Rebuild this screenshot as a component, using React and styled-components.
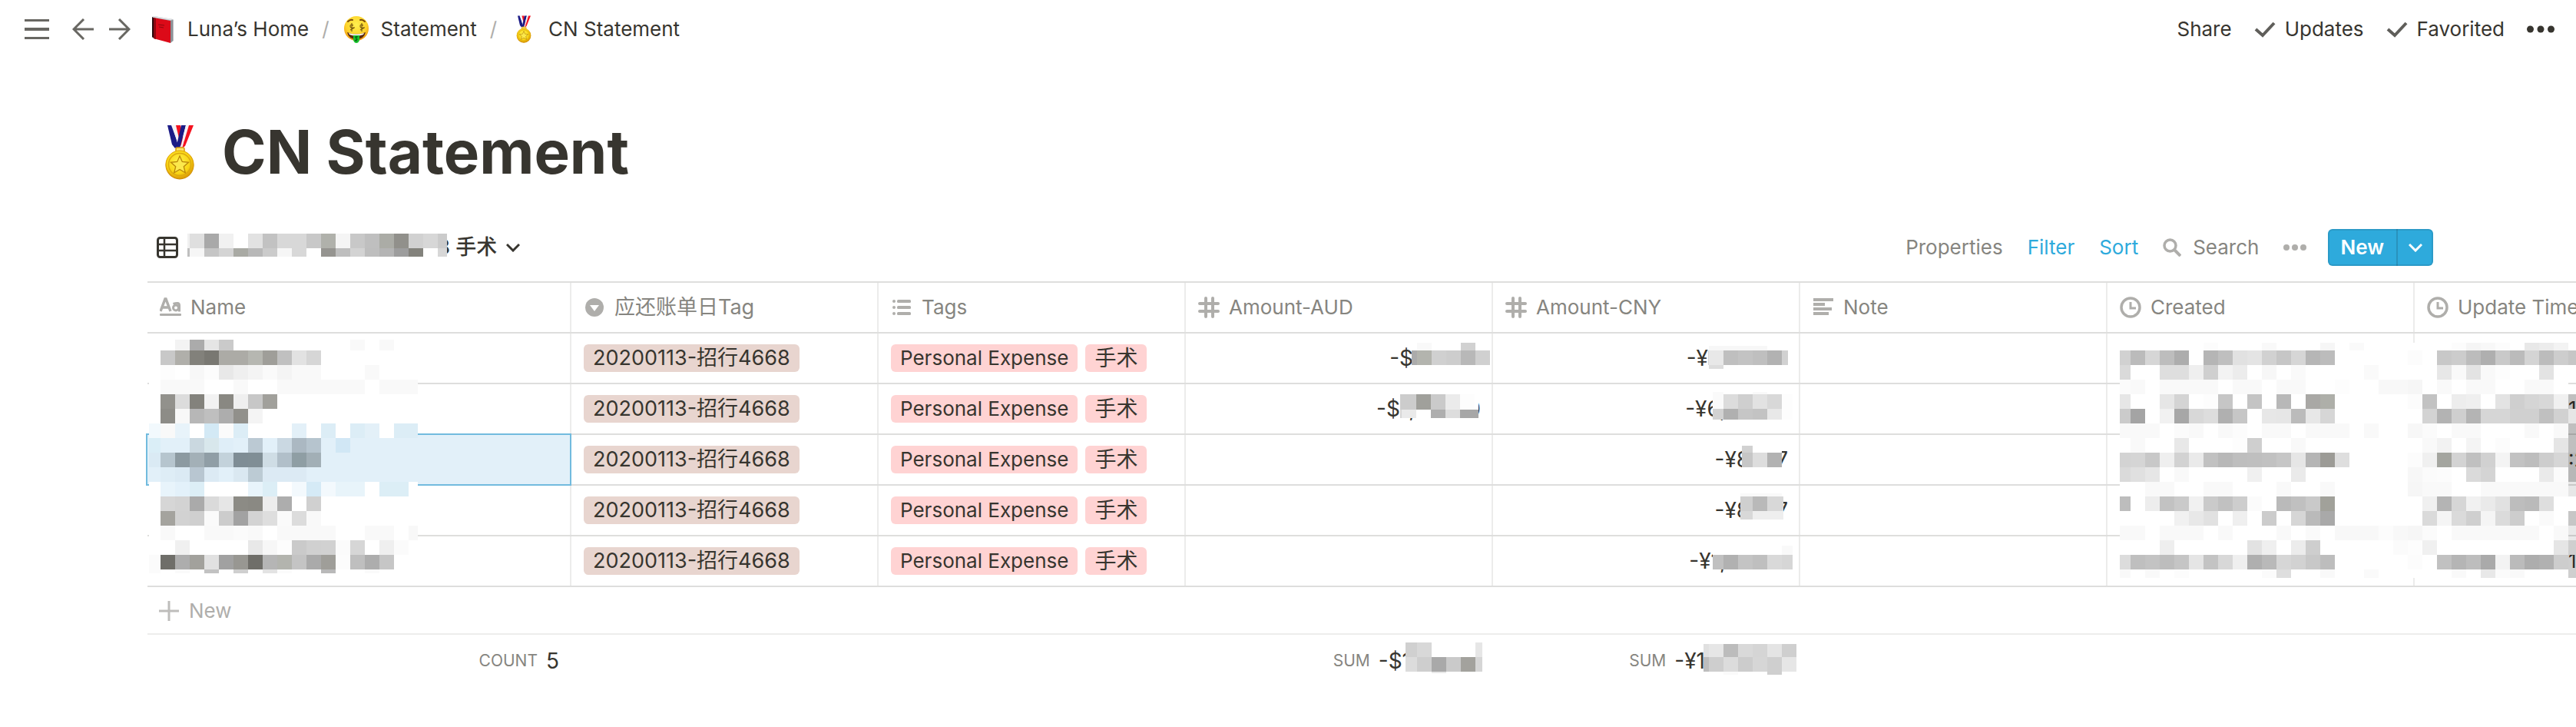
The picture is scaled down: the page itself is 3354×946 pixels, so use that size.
import React from 'react';
import styled, { createGlobalStyle, css } from 'styled-components';

const Global = createGlobalStyle`
  *, *::before, *::after { box-sizing: border-box; }
  body {
    margin: 0;
    background: #fff;
    color: #37352f;
    font-family: Inter, "Noto Sans CJK SC", "Liberation Sans", sans-serif;
    font-size: 26px;
    line-height: 36px;
  }
  button, a { font: inherit; color: inherit; text-decoration: none; }
  button { border: 0; padding: 0; background: none; cursor: pointer; white-space: nowrap; }
  svg { display: block; flex: none; }
`;

/* ---------- icons ---------- */

const MenuIcon = () => (
  <svg width="32" height="28" viewBox="0 0 32 28" fill="#686762">
    <rect y="1" width="32" height="3" /><rect y="12" width="32" height="4" /><rect y="24" width="32" height="3" />
  </svg>
);
const ArrowIcon = ({ right }) => (
  <svg width="28" height="28" viewBox="0 0 28 28" fill="none" stroke="#686762" strokeWidth="3">
    <path d={right ? 'M0 14h26M13 1l13 13-13 13' : 'M28 14H2M15 1L2 14l13 13'} />
  </svg>
);
const CheckIcon = () => (
  <svg width="28" height="28" viewBox="0 0 28 28" fill="none" stroke="#5f5e5a" strokeWidth="4">
    <path d="M2 14l9 8L26 6" />
  </svg>
);
const DotsIcon = ({ size, r, color }) => (
  <svg width={size} height="12" viewBox={`0 0 ${size} 12`} fill={color}>
    <circle cx={r} cy="6" r={r} /><circle cx={size / 2} cy="6" r={r} /><circle cx={size - r} cy="6" r={r} />
  </svg>
);
const BookIcon = () => (
  <svg width="36" height="36" viewBox="0 0 36 36">
    <path d="M4 2l3-1 24 4 1 1v27l-3 2L4 29z" fill="#b9bcc0" />
    <path d="M4 2l3 2v26l-3-2z" fill="#2a0a0c" />
    <path d="M6 3l22 4v29L6 30z" fill="#dc0a18" />
    <path d="M5 2l2-1 24 4-3 1z" fill="#e9e9ec" />
    <path d="M6 3l3 1v27l-3-1z" fill="#8f0710" />
    <path d="M12 12l8 1M13 15l6 1" stroke="#8f0710" strokeWidth="1" fill="none" />
    <path d="M28 7l3-1v27l-3 3z" fill="#8d9196" />
  </svg>
);
const MoneyFaceIcon = () => (
  <svg width="36" height="36" viewBox="0 0 36 36">
    <defs>
      <radialGradient id="face" cx="50%" cy="35%" r="65%">
        <stop offset="0" stopColor="#fff04f" /><stop offset=".65" stopColor="#fdd32c" /><stop offset="1" stopColor="#f0930c" />
      </radialGradient>
    </defs>
    <circle cx="18" cy="17" r="16" fill="url(#face)" />
    <path d="M7 8q3-3 6-2M23 6q3-1 6 2" stroke="#7a4a0c" strokeWidth="2" fill="none" strokeLinecap="round" />
    <path d="M14 13q-4-2-4 1t4 2-4 3M12 10v11M27 13q-4-2-4 1t4 2-4 3M25 10v11" stroke="#7a5a10" strokeWidth="1.2" fill="none" />
    <path d="M6 22q12 5 24 0-2 9-12 9T6 22z" fill="#5b2a0c" />
    <path d="M8 23q10 3 20 0l-1 2q-9 3-18 0z" fill="#fff" />
    <path d="M14 26h8v6q-1 4-4 4t-4-4z" fill="#19c32c" />
    <path d="M20 28q-4-1-3 1t2 2-3 2M18 27v7" stroke="#07661a" strokeWidth="1.2" fill="none" />
  </svg>
);
const MedalIcon = ({ size }) => (
  <svg width={size} height={size} viewBox="0 0 72 72">
    <defs>
      <radialGradient id="gold" cx="45%" cy="40%" r="60%">
        <stop offset="0" stopColor="#fff24a" /><stop offset=".7" stopColor="#f8d414" /><stop offset="1" stopColor="#dd9c06" />
      </radialGradient>
    </defs>
    <path d="M28 1h15l-5 28h-4z" fill="#f3f3f6" />
    <path d="M31 1h6l5 22-4 7z" fill="#f4121f" />
    <path d="M20 1h6l8 26-4 4-4-5z" fill="#1b1b86" />
    <path d="M25 1h4l8 24-2 3z" fill="#f3f3f6" />
    <path d="M38 1h6l-8 30h-5z" fill="#1b1b86" />
    <path d="M44 1h4l-8 27-3 2z" fill="#f3f3f6" />
    <path d="M48 1h6L43 28l-4 3z" fill="#f4121f" />
    <rect x="31" y="30" width="11" height="8" rx="2" fill="#fbe46a" stroke="#d79a0c" strokeWidth="1.5" />
    <circle cx="36" cy="53" r="18.5" fill="#c98605" />
    <circle cx="36" cy="52" r="18" fill="url(#gold)" stroke="#e0a50a" strokeWidth="1" />
    <circle cx="36" cy="52" r="14.5" fill="none" stroke="#dca90e" strokeWidth="1.5" />
    <path d="M36 41l3.3 7.5 8.2.8-6.2 5.4 1.9 8L36 58.5l-7.2 4.2 1.9-8-6.2-5.4 8.2-.8z" fill="#fbe84c" stroke="#b98508" strokeWidth="1.3" />
  </svg>
);
const TableIcon = () => (
  <svg width="28" height="28" viewBox="0 0 28 28" fill="none" stroke="#37352f" strokeWidth="3">
    <rect x="1.5" y="1.5" width="25" height="25" rx="3" />
    <path d="M2 10h24M2 18h24M10 2v24" strokeWidth="2.5" />
  </svg>
);
const ChevronIcon = ({ color }) => (
  <svg width="18" height="12" viewBox="0 0 18 12" fill="none" stroke={color} strokeWidth="3">
    <path d="M1 2l8 8 8-8" />
  </svg>
);
const SearchIcon = () => (
  <svg width="24" height="24" viewBox="0 0 24 24" fill="none" stroke="#afaeab" strokeWidth="3.5">
    <circle cx="9.5" cy="9.5" r="7.5" /><path d="M15 15l8 8" strokeWidth="4" />
  </svg>
);
const PlusIcon = () => (
  <svg width="26" height="26" viewBox="0 0 26 26" stroke="#bebdbb" strokeWidth="3">
    <path d="M13 0v26M0 13h26" />
  </svg>
);
const fieldShapes = {
  title: (
    <>
      <path d="M1 19L7 3h1l6 16M3.5 14h8" fill="none" stroke="#afaeab" strokeWidth="3.5" />
      <circle cx="21" cy="14.5" r="3.5" fill="none" stroke="#afaeab" strokeWidth="3" />
      <path d="M17.5 9.500q8-3 8 2v8" fill="none" stroke="#afaeab" strokeWidth="3" />
      <rect y="22" width="28" height="3" rx="1" />
    </>
  ),
  select: (<><circle cx="14" cy="14" r="12" /><path d="M8 11h12l-6 8z" fill="#fff" /></>),
  tags: (
    <>
      <circle cx="4" cy="6" r="2" /><circle cx="4" cy="14" r="2" /><circle cx="4" cy="22" r="2" />
      <rect x="8" y="4" width="18" height="4" rx="1.5" /><rect x="8" y="12" width="18" height="4" rx="1.5" /><rect x="8" y="20" width="18" height="4" rx="1.5" />
    </>
  ),
  number: (
    <path d="M10 2v24M19 2v24M2 9h24M2 19h24" fill="none" stroke="#afaeab" strokeWidth="4" strokeLinecap="round" />
  ),
  text: (
    <>
      <rect x="1" y="2" width="26" height="4" /><rect x="1" y="8" width="15" height="4" />
      <rect x="1" y="14" width="24" height="4" /><rect x="1" y="20" width="20" height="4" />
    </>
  ),
  time: (<g fill="none" stroke="#afaeab" strokeWidth="3.5"><circle cx="14" cy="14" r="12" /><path d="M14 7v8h7" strokeWidth="3" /></g>),
};
const FieldIcon = ({ kind }) => (
  <svg width="28" height="28" viewBox="0 0 28 28" fill="#afaeab" aria-hidden="true">{fieldShapes[kind]}</svg>
);

/* ---------- pixelated privacy patches ---------- */

const CELL = 19;
const MosaicSvg = styled.svg`
  position: relative;
  z-index: 1;
  align-self: flex-start;
  margin-top: ${(p) => p.$drop || 0}px;
  margin-left: ${(p) => -(p.$overlap || 0)}px;
  margin-right: ${(p) => -(p.$bleed || 0)}px;
`;

/* Each row lists "column:shade" or "from-to:shade"; a shade is two hex digits of grey or a full colour. */
const parseRow = (row) =>
  row.split(' ').filter(Boolean).flatMap((token) => {
    const [span, shade] = token.split(':');
    const [from, to = from] = span.split('-').map(Number);
    const fill = `#${shade.length === 2 ? shade.repeat(3) : shade}`;
    return Array.from({ length: to - from + 1 }, (_, i) => ({ col: from + i, fill }));
  });

const Mosaic = ({ w, h, fx = CELL, fy = CELL, rows, base = w, drop, overlap, bleed }) => (
  <MosaicSvg width={w} height={h} viewBox={`0 0 ${w} ${h}`} shapeRendering="crispEdges"
    $drop={drop} $overlap={overlap} $bleed={bleed} aria-hidden="true">
    <rect width={base} height={h} fill="#fff" />
    {rows.map((row, r) => parseRow(row).map(({ col, fill }) => (
      <rect key={`${r}-${col}`} fill={fill}
        x={col ? fx + (col - 1) * CELL : 0} y={r ? fy + (r - 1) * CELL : 0}
        width={col ? CELL : fx} height={r ? CELL : fy} />
    )))}
  </MosaicSvg>
);

const namePatch = {
  w: 350, h: 304, fx: 15, fy: 14,
  rows: [
    '2:f3 3:ab 4:e5 5:ca 14:f9 16:f9',
    '1:c8 2:b0afaa 3:82817b 4:797872 5:acaba6 6:acaba6 7:b6b7b1 8:9f9e99 9:c0 10:e2 11:d6',
    '1:fd 3:f7 4:fc 5:e8 6:ef 7:f4 8:fa 9:f4 10-11:f9 15:f9',
    '1-3:f9 6:f9 9-14:f9 16-18:f9',
    '1:92918c 2:dc 3:83827c 4:f2 5:898882 6:ef 7:c7 8:a1a09b',
    '1:8d8c87 2:f8 3:b7 4:bf 5:ad 6:91908b 7:f4',
    '0:f2f9fd 1:f9 2:e8f3fa 4:d3e9f5 5:fb 6:dcedf6 10:e3f0f8 12:dcedf6 14:dcedf6 15:e3f0f8 17-18:dcedf6',
    '0:daeef7 1-2:e2f0f9 3:cad8e0 4:d8e7ec 5:dfeef8 6:e2f0f9 7:bbc9d3 8:e2f0f9 9:cad8e2 10:abb8c2 11:b6c4ce 12:e2f0f9 13:d1e7f5 14-18:e2f0f9',
    '0:daeaf4 1:b6c5ce 2:8c9aa1 3:a3b0b7 4:909ea6 5:c3d2db 6:7f8d95 7:808e95 8:cfdde5 9:b1bfc9 10:8f9ea4 11:a2afb6 12-18:e2f0f9',
    '0:e2f0f9 1:deedf6 2:dbeaf4 3:b8c6d1 4:dceaf4 5:e2f0f9 6:dae8f1 7:bccbd4 8-10:dceaf4 11-18:e2f0f9',
    '1:e8f4fb 2:e3f1fa 3:dceef6 7:e8f4fb 8:dceef6 10:f3f9fd 11:d5eaf6 12:f3f9fd 13-14:e8f4fa 16-17:dceef6',
    '1:d6 2:d3 3:aa 4:da 5:e6 6:8c8b85 7:8a8983 8:ed 9:ad 11:d0',
    '1:a4a39e 2:d2 3:cf 4:fa 5:cc 6:a2 7:d3 8:de 9:fa 10:dc 11:f9',
    '1:f9 4-5:f9 6:fb 7:f9 9-12:f9 15-16:f9 18:f8',
    '2:f0 7:e8 8:f7 9:fd 10:ca 11:d0 12:d1 13:fb 14:d6 16:ef 17:fb',
    '0:fb 1:6f6e69 2:ad 3:a2a19c 4:e1 5:a1 6:989792 7:6f6e69 8:b5 9:b3b4ae 10:c4 11:aa 12:9f9e99 13:fc 14:bf 15:ad 16:c6',
    '0:fb 2:fa 4:c2 6:cf 8:e3 9:fb 12:b9 15:fa',
  ],
};

const datePatch = {
  w: 594, h: 306, fx: 14, fy: 10, base: 584,
  rows: [
    '6:fc 10:f9 14:f6 16:fa 23:fc 24:f5 25:f8 26:fc 28:e8 29:ec 30:f3',
    '0:d1 1:bb 2:d6 3:bd 4:ad 6:b5 7:bf 8:e1 9:e4 10:d1 11:c6 12:d6 13:b6 14:bc 20:fc 22:c8 23:cc 24:bc 25:af 26:c9 27:bb 28:d4 29:bc 30:cd 31:c6',
    '0:da 3-4:de 5:ef 6:cf 7:f3 8:ec 10:f7 12:fa 17:fa 22:e7 23:f9 24:e3 25:f9 26:fd 29:e3',
    '0:fb 1:f9 3-6:f9 8-9:f9 11-12:f9 15:fd 18-19:f8 20:f6 22:f9 24-25:f9 28-29:f9',
    '0:e6 3:e6 4:d4 6:fd 7:c6 9:c4 11:b8 13:a9a8a5 14:aeafa9 20:fc 21:c2 23:ed 24:ef 26:e3 27:cf 28:d5 29:d8 30:f0 31:00000040',
    '0:cb 1:a4 3:f1 4:a7 5:d8 6:dd 7:b0 8:c6 10:e7 11:e6 12:bb 13:e7 14:d6 21:d3 22:b3 23:cf 24:b4 25-26:d6 27-28:d0 29:c0 30:d1 31:e6',
    '0-2:f9 4:fb 5:f9 7:f9 8:fc 10-11:f9 13-15:f9 17:f9 20:f7 21:fb 23-24:f9 28:f9 30:f9 31:00000040',
    '1:f9 4:e8 8:fd 9:cf 12:f9 21:f9 22:f2 24:f4 26:fc 30:e5 31:00000040',
    '0:d3 1:d5 2:c8 3:ef 4:d2 5:ea 6:c1 7:b8 8:be 9:bf 10:c1 11:c6 12:e6 13:b5 14:9c9b96 15:de 20:fc 21:f0 22:a4a59f 23:d3 24:c0 25:d1 26:f4 27:c2 28:bd 29:cd 30:d6 31:00000048',
    '0:da 1:e0 2:e6 4:f9 9:f0 12:ea 20:f7 21:fb 22:fc 24:da 25:d4 29:ea 30:fb 31:00000048',
    '2-3:f9 6-7:f9 11:f9 14:f9 20:f6 21-22:f9 25-30:f9 31:00000018',
    '0:bd 2:ed 3:c2 4:ca 5:f1 6:ca 7:c1 8:cd 9:fb 11:ba 12:c0 13:c9 14:a1a19a 21:f0 22:b4 23:d6 24:f1 25:ea 26:e1 27:bd 28:ba 29:de',
    '4:f1 5:e8 6:e1 8:ef 10:cc 12:d6 13:ba 14:a9 21:da 22:f5 23:da 24:cf 25:f5 26:db 27:cd 29:fa 31:c6',
    '0-1:f9 3-5:f9 7:f9 11:f9 13:fa 15-17:f8 18:fc 19:f8 20:f6 21:fb 23-28:f9 30:f9 31:00000016',
    '3:ee 9:e2 10:ef 12:ec 13:ce 19:fb 20:fd 21:f0 30:e5 31:cf',
    '0:dc 1:bf 2:c3 3:bd 4:c5 5:e5 6:c3 7:d8 8:ef 9:af 10:b9 11:d6 12:d2 13:c8 14:bd 20:fc 22:c1 23:b5 24:bd 25:aa 26:f3 27:bb 28:ad 29:b1 30:cd 31:00000030',
    '0:f9 2:f9 4:fc 10:fb 11:de 14:f9 17:fa 23:f9 25:e8 26:fb 27:f9 31:cf',
  ],
};

const viewPatch = {
  w: 338, h: 30, fx: 3, fy: 19, drop: 6,
  rows: [
    '0:f0 1:df 2:a9 3:f1 5:e2 6:c2 7-8:d8 9:c8 10:b0b1ab 11:f5 12:c8 13:bf 14:abaca6 15:91908b 16:d1 17:d7 18:cb',
    '0:bf 1:f6 2:c5 3:d4 4:a9aaa4 5:b8 6:cb 7:f6 8:d8 10:959490 11:be 12:d3 13:be 14:b4 15:9d 16:83827c 18:d7',
  ],
};

/* ---------- top bar ---------- */

const Page = styled.main`
  overflow: hidden;
`;
const TopBar = styled.header`
  display: flex;
  align-items: center;
  justify-content: space-between;
  height: 76px;
  padding: 0 28px 0 32px;
`;
const Nav = styled.nav`
  display: flex;
  align-items: center;
`;
const IconButton = styled.button`
  display: flex;
  align-items: center;
  margin-right: ${(p) => p.$gap}px;
`;
const Crumb = styled.a`
  display: flex;
  align-items: center;
  gap: 14px;
  white-space: nowrap;
`;
const Slash = styled.span`
  padding: 0 17px;
  color: #afaeab;
`;
const Actions = styled.div`
  display: flex;
  align-items: center;
  gap: 29px;
`;
const Action = styled.button`
  display: flex;
  align-items: center;
  gap: 12px;
`;

/* ---------- title and view bar ---------- */

const TitleRow = styled.div`
  display: flex;
  align-items: center;
  gap: 19px;
  margin: 74px 0 52px;
  padding-left: 198px;
`;
const Title = styled.h1`
  margin: 0;
  font-size: 78px;
  line-height: 96px;
  font-weight: 700;
`;
const ViewBar = styled.div`
  display: flex;
  align-items: center;
  justify-content: space-between;
  height: 48px;
  margin-bottom: 20px;
  padding: 0 186px 0 204px;
`;
const ViewButton = styled.button`
  display: flex;
  align-items: center;
  height: 48px;
  font-size: 27px;
  font-weight: 500;
`;
const ViewIcon = styled.span`
  margin-right: 12px;
`;
const ViewName = styled.span`
  margin: 0 12px 0 -13px;
`;
const Tools = styled.div`
  display: flex;
  align-items: center;
  color: #868580;
`;
const ToolList = styled.div`
  display: flex;
  align-items: center;
  gap: 32px;
  margin-right: 28px;
`;
const Tool = styled.button`
  display: flex;
  align-items: center;
  gap: 15px;
  color: ${(p) => (p.$active ? '#2eaadc' : 'inherit')};
`;
const SplitButton = styled.div`
  display: flex;
  height: 48px;
  border-radius: 6px;
  overflow: hidden;
  background: #2eaadc;
  box-shadow: inset 0 0 0 2px rgba(15, 15, 15, 0.1);
  color: #fff;
`;
const NewButton = styled.button`
  padding: 0 16px;
  border-right: 2px solid rgba(15, 15, 15, 0.15);
  font-weight: 600;
`;
const MenuButton = styled.button`
  display: flex;
  align-items: center;
  padding: 0 14px;
`;

/* ---------- table ---------- */

const TableArea = styled.section`
  position: relative;
  padding-left: 192px;
`;
const Overlay = styled.div`
  position: absolute;
  top: ${(p) => p.$top}px;
  left: ${(p) => p.$left}px;
`;
const Table = styled.table`
  table-layout: fixed;
  width: 3352px;
  border-collapse: separate;
  border-spacing: 0;
`;
const Col = styled.col`
  width: ${(p) => p.$width}px;
`;
const HeadCell = styled.th`
  height: 68px;
  padding: 0 16px;
  border: solid #dededd;
  border-width: 2px 0;
  box-shadow: inset -2px 0 #ececeb;
  color: #868580;
  font-weight: 400;
`;
const HeadLabel = styled.div`
  display: flex;
  align-items: center;
  gap: 12px;
  white-space: nowrap;
  font-size: ${(p) => (p.$cjk ? 27 : 26)}px;
`;
const Cell = styled.td`
  position: relative;
  height: 66px;
  padding: 0 16px;
  border-bottom: 2px solid #dededd;
  box-shadow: inset -2px 0 #ececeb;
  ${(p) => p.$selected && css`
    background: #e2f0f9;
    &::after {
      content: '';
      position: absolute;
      inset: -2px 0 -2px -2px;
      border: 2px solid #72bbde;
    }
  `}
`;
const TagList = styled.div`
  display: flex;
  gap: 10px;
`;
const Tag = styled.span`
  padding: 0 12px;
  border-radius: 6px;
  background: ${(p) => (p.$tone === 'brown' ? '#e8d5cf' : '#ffd3d3')};
  font-size: ${(p) => p.$size}px;
  white-space: nowrap;
`;
const Amount = styled.div`
  display: flex;
  align-items: center;
  justify-content: flex-end;
  height: 64px;
  font-size: 28px;
  white-space: nowrap;
`;
const Tail = styled.span`
  margin-left: ${(p) => -p.$hidden}px;
`;
const TimeTail = styled.div`
  padding-left: 184px;
  white-space: nowrap;
`;
const NewRowCell = styled.td`
  height: 62px;
  padding: 2px 15px 0;
  border-bottom: 2px solid #ededec;
`;
const NewRow = styled.button`
  display: flex;
  align-items: center;
  gap: 13px;
  color: #afaeab;
`;
const TotalCell = styled.td`
  height: 68px;
  padding: 0 16px;
`;
const Total = styled(Amount)`
  height: 68px;
`;
const TotalLabel = styled.span`
  margin-right: 11px;
  color: #868580;
  font-size: 21px;
`;

const columns = [
  { kind: 'title', label: 'Name' },
  { kind: 'select', label: '应还账单日Tag', cjk: true },
  { kind: 'tags', label: 'Tags' },
  { kind: 'number', label: 'Amount-AUD' },
  { kind: 'number', label: 'Amount-CNY' },
  { kind: 'text', label: 'Note' },
  { kind: 'time', label: 'Created' },
  { kind: 'time', label: 'Update Time' },
];

const rows = [
  {
    aud: { lead: '-$', patch: { w: 102, h: 29, fx: 7, fy: 10, drop: 12, overlap: 2, bleed: 12, rows: ['1:f9 4:d1', '0:ab 1:b3b4ae 2:d0 3:cd 4:b8 5:d0'] } },
    cny: { lead: '-¥', patch: { w: 104, h: 30, fx: 1, fy: 6, drop: 16, rows: ['1-4:f7', '0:d6 1:e8 2:bf 3:c3 4:bf 5:b2 6:d1', '1:dd'] } },
  },
  {
    aud: { lead: '-$1,', tail: '0', hidden: 15, patch: { w: 102, h: 31, fx: 2, fy: 20, drop: 13, overlap: 19, rows: ['0-1:cc 2:a0a09b 3:ca 4:eb 5:fd', '0:d6 1:ea 3:ae 4:dd 5-6:a7'] } },
    cny: { lead: '-¥6,', patch: { w: 104, h: 36, fx: 14, fy: 3, drop: 10, overlap: 17, bleed: 6, rows: ['0:fa 3:f9', '0:fa 1:dc 2:cf 3:e2 4:d8 5:fd', '0:d2 1:b0 2:c6 3:c3 4:e8 5:fd'] } },
    time: '1',
  },
  {
    selected: true,
    cny: { lead: '-¥8', tail: '7', hidden: 8, patch: { w: 52, h: 28, fx: 14, fy: 9, drop: 14, overlap: 10, rows: ['0:d1', '0:c6 1:dd 2:b2'] } },
    time: ':2',
  },
  {
    cny: { lead: '-¥8', tail: '7', hidden: 10, patch: { w: 56, h: 34, fx: 16, fy: 4, drop: 10, overlap: 12, rows: ['0-2:f9', '0:cf 1:b9 2-3:d8', '0:d8 1-3:ee'] } },
  },
  {
    cny: { lead: '-¥1,', patch: { w: 104, h: 31, fx: 14, fy: 12, drop: 12, overlap: 17, bleed: 6, rows: ['5:f9', '0:c0 1:b1 2:c4 3:bf 4:d9 5:d6'] } },
    time: '1',
  },
];

const audTotal = { w: 100, h: 40, fx: 15, fy: 19, drop: 10, overlap: 7, bleed: 2, rows: ['0:d0 1:d8 5:e6', '0:dc 1:ce 2:a9 3:ca 4:a3a29d 5:d6', '2:e8'] };
const cnyTotal = { w: 121, h: 40, fx: 7, fy: 17, drop: 12, overlap: 2, bleed: 11, rows: ['0:e0 1:e6 2:bc 3:d9 4:d5 5:e4 6:cf', '0:bd 1:ce 2:dc 3:cc 4:d6 5:cf 6:e6', '2:fa 5:cf'] };

const AmountValue = ({ value }) => value ? (
  <Amount>
    <span>{value.lead}</span>
    <Mosaic {...value.patch} />
    {value.tail && <Tail $hidden={value.hidden}>{value.tail}</Tail>}
  </Amount>
) : null;

export default function App() {
  return (
    <Page>
      <Global />
      <TopBar>
        <Nav aria-label="Breadcrumb">
          <IconButton $gap={30} aria-label="Menu"><MenuIcon /></IconButton>
          <IconButton $gap={20} aria-label="Back"><ArrowIcon /></IconButton>
          <IconButton $gap={24} aria-label="Forward"><ArrowIcon right /></IconButton>
          <Crumb href="#home"><BookIcon />Luna’s Home</Crumb>
          <Slash>/</Slash>
          <Crumb href="#statement"><MoneyFaceIcon />Statement</Crumb>
          <Slash>/</Slash>
          <Crumb href="#cn-statement"><MedalIcon size={36} />CN Statement</Crumb>
        </Nav>
        <Actions>
          <Action>Share</Action>
          <Action><CheckIcon />Updates</Action>
          <Action><CheckIcon />Favorited</Action>
          <Action aria-label="More"><DotsIcon size={36} r={4.5} color="#37352f" /></Action>
        </Actions>
      </TopBar>

      <TitleRow>
        <MedalIcon size={72} />
        <Title>CN Statement</Title>
      </TitleRow>

      <ViewBar>
        <ViewButton>
          <ViewIcon><TableIcon /></ViewIcon>
          <Mosaic {...viewPatch} />
          <ViewName>8 手术</ViewName>
          <ChevronIcon color="#37352f" />
        </ViewButton>
        <Tools>
          <ToolList>
            <Tool>Properties</Tool>
            <Tool $active>Filter</Tool>
            <Tool $active>Sort</Tool>
            <Tool><SearchIcon />Search</Tool>
            <Tool aria-label="More options"><DotsIcon size={30} r={4} color="#afaeab" /></Tool>
          </ToolList>
          <SplitButton>
            <NewButton>New</NewButton>
            <MenuButton aria-label="New from template"><ChevronIcon color="#fff" /></MenuButton>
          </SplitButton>
        </Tools>
      </ViewBar>

      <TableArea>
        <Table>
          <colgroup>
            <Col $width={552} />
            {columns.slice(1).map((c) => <Col key={c.label} $width={400} />)}
          </colgroup>
          <thead>
            <tr>
              {columns.map((c) => (
                <HeadCell key={c.label} scope="col">
                  <HeadLabel $cjk={c.cjk}><FieldIcon kind={c.kind} />{c.label}</HeadLabel>
                </HeadCell>
              ))}
            </tr>
          </thead>
          <tbody>
            {rows.map((row, i) => (
              <tr key={i}>
                <Cell $selected={row.selected} />
                <Cell><TagList><Tag $tone="brown" $size={27}>20200113-招行4668</Tag></TagList></Cell>
                <Cell><TagList><Tag $size={26}>Personal Expense</Tag><Tag $size={28}>手术</Tag></TagList></Cell>
                <Cell><AmountValue value={row.aud} /></Cell>
                <Cell><AmountValue value={row.cny} /></Cell>
                <Cell />
                <Cell />
                <Cell>{row.time && <TimeTail>{row.time}</TimeTail>}</Cell>
              </tr>
            ))}
            <tr>
              <NewRowCell colSpan={8}><NewRow><PlusIcon />New</NewRow></NewRowCell>
            </tr>
          </tbody>
          <tfoot>
            <tr>
              <TotalCell><Total><TotalLabel>COUNT</TotalLabel>5</Total></TotalCell>
              <TotalCell colSpan={2} />
              <TotalCell><Total><TotalLabel>SUM</TotalLabel>-$1<Mosaic {...audTotal} /></Total></TotalCell>
              <TotalCell><Total><TotalLabel>SUM</TotalLabel>-¥1<Mosaic {...cnyTotal} /></Total></TotalCell>
              <TotalCell colSpan={3} />
            </tr>
          </tfoot>
        </Table>
        <Overlay $top={76} $left={194}><Mosaic {...namePatch} /></Overlay>
        <Overlay $top={80} $left={2760}><Mosaic {...datePatch} /></Overlay>
      </TableArea>
    </Page>
  );
}
